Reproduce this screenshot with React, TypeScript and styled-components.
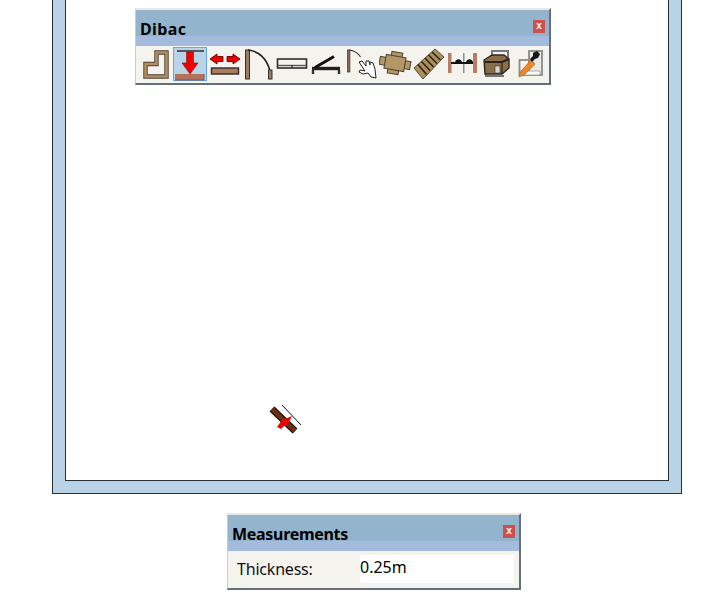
import React from 'react';
import styled, { createGlobalStyle } from 'styled-components';

const GlobalStyle = createGlobalStyle`
    html, body {
        margin: 0;
        padding: 0;
        background: #ffffff;
        overflow: hidden;
    }
    body {
        font-family: "Noto Sans", "Liberation Sans", sans-serif;
    }
`;

const Page = styled.div`
    position: relative;
    width: 716px;
    height: 608px;
    overflow: hidden;
`;

const ViewportFrame = styled.div`
    box-sizing: border-box;
    width: 630px;
    height: 494px;
    margin-left: 52px;
    padding: 0 12px 12px 12px;
    background: #b9d2e5;
    border: 1px solid #2b2e35;
    border-top: none;
    display: flex;
`;

const Canvas = styled.div`
    flex: 1;
    background: #ffffff;
    border: 1px solid #2b2e35;
    border-top: none;
`;

const Palette = styled.div<{ $left: number; $top: number; $width: number }>`
    box-sizing: border-box;
    width: ${p => p.$width}px;
    background: #f4f3ee;
    border-top: 2px solid #e9e9e4;
    border-left: 1px solid #c9ccd0;
    border-right: 2px solid #66707a;
    border-bottom: 2px solid #66707a;
`;

const FloatingPalette = styled(Palette)`
    position: absolute;
    left: ${p => p.$left}px;
    top: ${p => p.$top}px;
`;

const FlowPalette = styled(Palette)`
    margin-top: 19px;
    margin-left: ${p => p.$left}px;
`;

const TitleBar = styled.div`
    height: 36px;
    box-sizing: border-box;
    padding: 0 4px 0 3px;
    display: flex;
    justify-content: space-between;
    background: linear-gradient(#93b4cd 0, #93b4cd 26px, #a3bbdd 26px, #a3bbdd 36px);
`;

const TitleText = styled.span<{ $tracking: number }>`
    font-size: 16px;
    font-weight: 700;
    letter-spacing: ${p => p.$tracking}px;
    line-height: 26px;
    height: 26px;
    margin-top: 6px;
    margin-left: 1px;
    color: #000000;
`;

const CloseButton = styled.span`
    width: 12px;
    height: 13px;
    margin-top: 10px;
    background: #cf4f4f;
    color: #ffffff;
    font-family: "Liberation Sans", sans-serif;
    font-size: 10px;
    font-weight: 700;
    line-height: 12px;
    text-align: center;
`;

const Toolbar = styled.div`
    display: grid;
    grid-template-columns: repeat(12, 1fr);
    width: 411px;
    height: 36px;
    padding: 1px 0 0 3px;
`;

const ToolButton = styled.div<{ $active?: boolean }>`
    width: 34px;
    height: 34px;
    box-sizing: border-box;
    border: 1px solid ${p => (p.$active ? '#68a6e6' : 'transparent')};
    background: ${p => (p.$active ? '#b9d3e8' : 'transparent')};
    svg {
        display: block;
        margin: -1px;
    }
`;

const MeasureRow = styled.div`
    height: 37px;
    box-sizing: border-box;
    padding: 4px 5px 5px 9px;
    display: flex;
    align-items: stretch;
`;

const MeasureLabel = styled.span`
    width: 123px;
    font-size: 16px;
    letter-spacing: -0.2px;
    line-height: 28px;
    color: #111111;
`;

const MeasureValue = styled.span`
    flex: 1;
    background: #ffffff;
    font-size: 16px;
    line-height: 25px;
    color: #000000;
`;

const CursorMark = styled.svg`
    position: absolute;
    left: 266px;
    top: 401px;
`;

const IconSvg = ({ children }: { children: React.ReactNode }) => (
    <svg width="34" height="34" viewBox="0 0 34 34" fill="none">
        {children}
    </svg>
);

const icons: React.ReactNode[] = [
    <IconSvg key="walls">
        <path d="M6.5 29.5V17H17.5V5.5H27.5V29.5Z" stroke="#4c4030" strokeWidth="4.4" />
        <path d="M6.5 29.5V17H17.5V5.5H27.5V29.5Z" stroke="#b0905e" strokeWidth="2.6" />
    </IconSvg>,
    <IconSvg key="thick">
        <path d="M4 4H31" stroke="#55585a" strokeWidth="2" />
        <path d="M13.5 5H20.5V16H25L17 27L9 16H13.5Z" fill="#f00000" stroke="#8a1010" strokeWidth="0.6" />
        <rect x="2" y="27" width="29" height="6" fill="#b5715b" />
        <path d="M2 33H31V27" stroke="#6b5a50" strokeWidth="1" />
    </IconSvg>,
    <IconSvg key="offset">
        <path d="M2 12L9 7V9.5H15V14.5H9V17Z" fill="#ee0000" stroke="#600" strokeWidth="0.9" />
        <path d="M32 12L25 7V9.5H19V14.5H25V17Z" fill="#ee0000" stroke="#600" strokeWidth="0.9" />
        <rect x="3.5" y="21" width="27" height="6" fill="#ad7c5d" stroke="#2d2a26" strokeWidth="1.4" />
    </IconSvg>,
    <IconSvg key="door">
        <rect x="3.5" y="3" width="4" height="29" fill="#9c7d62" stroke="#36312c" strokeWidth="1" />
        <path d="M6 3C17 4 25 12 28 24" stroke="#222" strokeWidth="1.6" />
        <rect x="26.5" y="23" width="3.5" height="9" fill="#9c7d62" stroke="#36312c" strokeWidth="1" />
    </IconSvg>,
    <IconSvg key="window">
        <rect x="1.5" y="12" width="29" height="9" fill="#f4f3ee" stroke="#2e2e2e" strokeWidth="1.6" />
        <path d="M2 18.5H30" stroke="#555" strokeWidth="1.4" />
        <path d="M16 18V21" stroke="#222" strokeWidth="1.2" />
    </IconSvg>,
    <IconSvg key="opening">
        <path d="M2 21.5H30" stroke="#222" strokeWidth="3.4" />
        <path d="M3 23V27M29 23V27" stroke="#333" strokeWidth="2.4" />
        <path d="M5 20.5L24 9.5" stroke="#111" strokeWidth="3" />
    </IconSvg>,
    <IconSvg key="handle">
        <rect x="2.5" y="3" width="2.4" height="22" fill="#8c6a50" stroke="#333" strokeWidth="0.7" />
        <path d="M4 3C9 3.5 13 6 15.5 10" stroke="#333" strokeWidth="1.2" />
        <path
            d="M14 15L17 14L21 19V14L24 14L25 18V15L28 16L30 22L31 31L26 30L23 26L18 27L14 25L15 23L20 24Z"
            fill="#ffffff"
            stroke="#222"
            strokeWidth="1"
        />
    </IconSvg>,
    <IconSvg key="furniture">
        <g transform="rotate(10 16 16)" stroke="#4e4230" strokeWidth="1" fill="#b49766">
            <rect x="11" y="5" width="11" height="6" />
            <rect x="10" y="21" width="11" height="6" />
            <rect x="0.5" y="12" width="7" height="8" />
            <rect x="24.5" y="12" width="7" height="8" />
            <rect x="6" y="9" width="20" height="14" />
        </g>
    </IconSvg>,
    <IconSvg key="stairs">
        <path d="M1 21L22 2L31 10L10 32Z" fill="#ad8f5c" stroke="#5a4a30" strokeWidth="1" />
        <path
            d="M5 17.5L13.5 27.5M8.5 14.5L17 23.5M12 11L20.5 20M15.5 8L24 16.5M19 5L27.5 13"
            stroke="#2c2416"
            strokeWidth="1.6"
        />
    </IconSvg>,
    <IconSvg key="railing">
        <rect x="1" y="6" width="3.5" height="20" fill="#b87d65" />
        <rect x="16" y="6" width="1.5" height="20" fill="#8f9088" />
        <rect x="26" y="6" width="4" height="20" fill="#b87d65" />
        <path d="M4 16H26" stroke="#111" strokeWidth="2" />
        <path d="M8 16C8 11 15 11 15 16ZM19 16C19 11 26 11 26 16Z" fill="#111" />
    </IconSvg>,
    <IconSvg key="materials">
        <path d="M10 12V4H26V12" stroke="#777" strokeWidth="2" />
        <path d="M4 24V29H22" stroke="#777" strokeWidth="2" />
        <path d="M2 13L10 8L22 8L27 12V21L20 27H3Z" fill="#8a6e4a" stroke="#2f2820" strokeWidth="1.4" />
        <path d="M3 15H20L27 12" stroke="#2a241c" strokeWidth="2" />
        <path d="M20 15V27" stroke="#2a241c" strokeWidth="1.2" />
        <rect x="13" y="19" width="5" height="7" fill="#d8d8d2" stroke="#333" strokeWidth="0.6" />
    </IconSvg>,
    <IconSvg key="dropper">
        <rect x="3.5" y="13" width="10" height="15" fill="#f4f3ee" stroke="#8a8a86" strokeWidth="1.8" />
        <rect x="13" y="4" width="13" height="24" fill="#e8e8e4" stroke="#8a8a86" strokeWidth="1.8" />
        <path d="M5 24H24V28H5Z" fill="#f8f8f6" stroke="#999" strokeWidth="0.8" />
        <path d="M3 30L5 24L15 13L19 17L8 28Z" fill="#f0872a" stroke="#a65a1a" strokeWidth="0.6" />
        <path d="M14 12L17 9L17 6L21 4L24 7L22 11L19 12L16 15Z" fill="#141414" />
    </IconSvg>,
];

function ToolPalette() {
    return (
        <FloatingPalette $left={135} $top={8} $width={416}>
            <TitleBar>
                <TitleText $tracking={0.4}>Dibac</TitleText>
                <CloseButton>x</CloseButton>
            </TitleBar>
            <Toolbar>
                {icons.map((icon, i) => (
                    <ToolButton key={i} $active={i === 1}>
                        {icon}
                    </ToolButton>
                ))}
            </Toolbar>
        </FloatingPalette>
    );
}

export default function App() {
    return (
        <Page>
            <GlobalStyle />
            <ViewportFrame>
                <Canvas />
            </ViewportFrame>
            <ToolPalette />
            <CursorMark width="36" height="36" viewBox="0 0 36 36" fill="none">
                <path d="M6 8L29 30" stroke="#1a0a05" strokeWidth="7" />
                <path d="M6 8L29 30" stroke="#6b2f14" strokeWidth="4.5" />
                <path d="M16 4L35 24" stroke="#111111" strokeWidth="1" />
                <path d="M26 15L16 19L11 26L15 28L18 25L21 25Z" fill="#f00000" />
            </CursorMark>
            <FlowPalette $left={227} $top={0} $width={294}>
                <TitleBar>
                    <TitleText $tracking={-0.3}>Measurements</TitleText>
                    <CloseButton>x</CloseButton>
                </TitleBar>
                <MeasureRow>
                    <MeasureLabel>Thickness:</MeasureLabel>
                    <MeasureValue>0.25m</MeasureValue>
                </MeasureRow>
            </FlowPalette>
        </Page>
    );
}
